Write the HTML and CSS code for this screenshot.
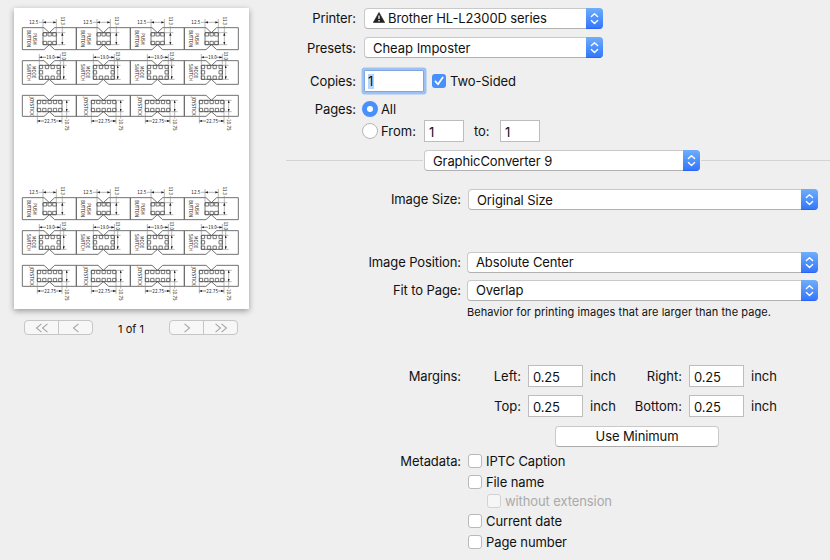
FILE: index.html
```
<!DOCTYPE html>
<html lang="en">
<head>
<meta charset="utf-8">
<title>Print</title>
<link rel="stylesheet" href="styles.css">
</head>
<body>
<svg width="0" height="0" class="defs">
  <defs>
    <marker id="arrow" viewBox="0 0 8 6" refX="8" refY="3" markerWidth="9" markerHeight="7" markerUnits="userSpaceOnUse" orient="auto-start-reverse"><path d="M0 0L8 3L0 6z" fill="#222"/></marker>
    <g id="strip">
      <g class="frame">
        <path d="M67 83H132L148 98L164 83H229M67 149H132L148 134L164 149H229M67 83V149M229 83V149"/>
        <path d="M67 182H132L148 197L164 182H229M67 253H132L148 238L164 253H229M67 182V253M229 182V253"/>
        <path d="M67 286H132L148 301L164 286H229M67 349H132L148 335L164 349H229M67 286V349M229 286V349"/>
      </g>
      <g class="parts">
        <path d="M129 98H169V134H129zM118 196H181V238H118zM112 301H186V335H112z"/>
        <path d="M129 98h11v10h-11zM144 98h10v10h-10zM158 98h11v10h-11zM129 124h11v10h-11zM144 124h10v10h-10zM158 124h11v10h-11z"/>
        <path d="M118 196h10v10h-10zM136 196h10v10h-10zM153 196h10v10h-10zM171 196h10v10h-10zM118 212h10v10h-10zM171 212h10v10h-10zM118 228h10v10h-10zM136 228h10v10h-10zM153 228h10v10h-10zM171 228h10v10h-10z"/>
        <path d="M112 301h10v10h-10zM128 301h10v10h-10zM144 301h10v10h-10zM160 301h10v10h-10zM176 301h10v10h-10zM112 325h10v10h-10zM128 325h10v10h-10zM144 325h10v10h-10zM160 325h10v10h-10zM176 325h10v10h-10z"/>
      </g>
      <g class="dims">
        <path d="M129 96V57M169 96V57M118 194V162M181 194V162M112 337V371M186 337V371M171 98H196M171 134H196M183 196H200M183 238H200M188 301H209M188 335H209M117 67H129M138 172H118M162 172H181M132 363H112M169 363H186"/>
        <path marker-start="url(#arrow)" marker-end="url(#arrow)" d="M129 67H169"/>
        <path marker-end="url(#arrow)" d="M138 172H118"/><path marker-end="url(#arrow)" d="M164 172H181"/>
        <path marker-end="url(#arrow)" d="M132 363H112"/><path marker-end="url(#arrow)" d="M169 363H186"/>
        <path marker-start="url(#arrow)" marker-end="url(#arrow)" d="M187 98V134"/>
        <path marker-start="url(#arrow)" marker-end="url(#arrow)" d="M191 196V238"/>
        <path marker-start="url(#arrow)" marker-end="url(#arrow)" d="M200 301V335"/>
        <path d="M187 98V78M191 196V182M200 335V356"/>
      </g>
      <g class="marks">
        <text x="88" y="73" textLength="27" lengthAdjust="spacingAndGlyphs">12.5</text>
        <text x="139" y="178" textLength="25" lengthAdjust="spacingAndGlyphs">19.0</text>
        <text x="133" y="369" textLength="35" lengthAdjust="spacingAndGlyphs">22.75</text>
        <text transform="translate(182 50) rotate(90)" textLength="25" lengthAdjust="spacingAndGlyphs">11.3</text>
        <text transform="translate(186 155) rotate(90)" textLength="25" lengthAdjust="spacingAndGlyphs">13.0</text>
        <text transform="translate(195 357) rotate(90)" textLength="35" lengthAdjust="spacingAndGlyphs">10.75</text>
        <text transform="translate(98 100) rotate(90)" textLength="34" lengthAdjust="spacingAndGlyphs">PUSH</text>
        <text transform="translate(81 90) rotate(90)" textLength="51" lengthAdjust="spacingAndGlyphs">BUTTON</text>
        <text transform="translate(97 198) rotate(90)" textLength="37" lengthAdjust="spacingAndGlyphs">MODE</text>
        <text transform="translate(80 192) rotate(90)" textLength="51" lengthAdjust="spacingAndGlyphs">SWITCH</text>
        <text transform="translate(91 290) rotate(90)" textLength="57" lengthAdjust="spacingAndGlyphs">JOYSTICK</text>
      </g>
    </g>
    <g id="sheet"><use href="#strip"/><use href="#strip" x="162"/><use href="#strip" x="324"/><use href="#strip" x="486"/></g>
    <g id="chevrons"><rect width="17" height="21" fill="url(#blue)"/><path d="M5.4 8.6L8.5 5.8L11.6 8.6M5.4 12.6L8.5 15.4L11.6 12.6" fill="none" stroke="#fff" stroke-width="1.4" stroke-linecap="round" stroke-linejoin="round"/></g>
    <linearGradient id="blue" x2="0" y2="1"><stop stop-color="#6eaefa"/><stop offset=".95" stop-color="#3478fb"/><stop offset="1" stop-color="#2350f5"/></linearGradient>
  </defs>
</svg>

<aside class="preview">
  <svg class="paper" width="235" height="301" viewBox="42 24 705 903"><use href="#sheet"/><use href="#sheet" y="510"/></svg>
  <div class="pager">
    <div class="seg">
      <button><svg width="14" height="10"><path d="M6.5 .8L1.5 5L6.5 9.2M12.5 .8L7.5 5L12.5 9.2"/></svg></button>
      <button><svg width="8" height="10"><path d="M6.5 .8L1.5 5L6.5 9.2"/></svg></button>
    </div>
    <span class="count">1 of 1</span>
    <div class="seg">
      <button><svg width="8" height="10"><path d="M1.5 .8L6.5 5L1.5 9.2"/></svg></button>
      <button><svg width="14" height="10"><path d="M1.5 .8L6.5 5L1.5 9.2M7.5 .8L12.5 5L7.5 9.2"/></svg></button>
    </div>
  </div>
</aside>

<main class="options">
  <div class="row top printer"><label>Printer:</label><div class="select"><svg class="warn" width="12" height="11"><path d="M6 .4L11.7 10.5H.3z" fill="#222" stroke="#222" stroke-width=".6" stroke-linejoin="round"/><path d="M6 3.4V7M6 8.1V9.4" stroke="#fff" stroke-width="1.3"/></svg><span>Brother HL-L2300D series</span><svg class="arrows" width="17" height="21"><use href="#chevrons"/></svg></div></div>
  <div class="row top presets"><label>Presets:</label><div class="select"><span>Cheap Imposter</span><svg class="arrows" width="17" height="21"><use href="#chevrons"/></svg></div></div>
  <div class="row top copies"><label>Copies:</label><div class="field focus"><mark>1</mark></div><span class="check on"><svg width="14" height="14"><path d="M3.4 7.4L6 10.3L10.7 3.4" fill="none" stroke="#fff" stroke-width="1.7" stroke-linecap="round" stroke-linejoin="round"/></svg></span><span>Two-Sided</span></div>
  <div class="row top all"><label>Pages:</label><span class="radio on"></span><span>All</span></div>
  <div class="row top from"><label></label><span class="radio"></span><span class="from-text">From:</span><div class="field">1</div><span class="to-text">to:</span><div class="field">1</div></div>
  <div class="row divider"><hr class="before"><div class="select"><span>GraphicConverter 9</span><svg class="arrows" width="17" height="21"><use href="#chevrons"/></svg></div><hr class="after"></div>
  <div class="row wide size"><label>Image Size:</label><div class="select"><span>Original Size</span><svg class="arrows" width="17" height="21"><use href="#chevrons"/></svg></div></div>
  <div class="row wide position"><label>Image Position:</label><div class="select"><span>Absolute Center</span><svg class="arrows" width="17" height="21"><use href="#chevrons"/></svg></div></div>
  <div class="row wide fit"><label>Fit to Page:</label><div class="select"><span>Overlap</span><svg class="arrows" width="17" height="21"><use href="#chevrons"/></svg></div></div>
  <div class="row note"><span>Behavior for printing images that are larger than the page.</span></div>
  <div class="row margins first"><label>Margins:</label><span class="side">Left:</span><div class="field">0.25</div><span class="unit">inch</span><span class="side far">Right:</span><div class="field">0.25</div><span class="unit">inch</span></div>
  <div class="row margins"><label></label><span class="side">Top:</span><div class="field">0.25</div><span class="unit">inch</span><span class="side far">Bottom:</span><div class="field">0.25</div><span class="unit">inch</span></div>
  <div class="row action"><button class="push">Use Minimum</button></div>
  <div class="row meta caption"><label>Metadata:</label><span class="check"></span><span>IPTC Caption</span></div>
  <div class="row meta filename"><label></label><span class="check"></span><span>File name</span></div>
  <div class="row meta extension"><label></label><span class="check"></span><span>without extension</span></div>
  <div class="row meta date"><label></label><span class="check"></span><span>Current date</span></div>
  <div class="row meta number"><label></label><span class="check"></span><span>Page number</span></div>
</main>
</body>
</html>
```
FILE: styles.css
```
* { box-sizing: border-box; }
body {
  margin: 0;
  width: 830px;
  height: 560px;
  overflow: hidden;
  display: flex;
  background: #efefef;
  color: #111;
  font: 13px/16px Inter, "Liberation Sans", sans-serif;
  letter-spacing: -.1px;
  white-space: nowrap;
}
.defs { position: absolute; }

.preview { flex: none; width: 286px; padding: 8px 0 0 14px; }
.paper { display: block; background: #fff; box-shadow: 0 2px 6px rgba(0,0,0,.36); }
.frame { fill: none; stroke: #666; stroke-width: 2.8; }
.parts { fill: none; stroke: #555; stroke-width: 2.4; }
.dims { fill: none; stroke: #888; stroke-width: 1.8; }
.marks { font: 16px "DejaVu Sans", sans-serif; fill: #222; letter-spacing: 0; text-rendering: geometricPrecision; }

.pager { display: flex; align-items: center; margin: 11px 0 0 10px; height: 15px; }
.seg { display: flex; width: 69px; height: 15px; border: 1px solid #c6c6c6; border-radius: 4px; background: #f7f7f7; }
.seg button { flex: 1; display: flex; align-items: center; justify-content: center; padding: 0; border: 0; background: none; }
.seg button + button { border-left: 1px solid #c6c6c6; }
.seg path { fill: none; stroke: #a5a5a5; stroke-width: 1.1; }
.count { width: 76px; text-align: center; font-size: 11px; letter-spacing: 0; position: relative; top: 1px; }

.options { flex: 1; padding-top: 4px; }
.row { display: flex; align-items: center; }
.row label { flex: none; width: 175px; text-align: right; margin-right: 7px; }
.top label { width: 70px; margin-right: 8px; }

.select {
  flex: none;
  display: flex;
  align-items: center;
  width: 351px;
  height: 21px;
  padding-left: 9px;
  background: linear-gradient(#c9c9c9, #c9c9c9 90%, #a9a9a9);
  border-radius: 4px;
  overflow: hidden;
  position: relative;
}
.select::before { content: ""; position: absolute; inset: 1px; background: #fff; border-radius: 3px; }
.select > * { position: relative; }
.arrows { margin-left: auto; }
.warn { margin-right: 3px; }
.printer .select, .presets .select { width: 239px; }
.presets span { letter-spacing: -.03px; }
.printer label, .printer span, .printer .warn, .wide label, .wide span { position: relative; top: -1px; }

.field {
  flex: none;
  width: 55px;
  height: 22px;
  padding: 3px 0 0 4px;
  border: 1px solid #bdbdbd;
  background: #fff;
}
.focus { width: 60px; margin: 0 8px 0 0; border-color: #7fa6dd; box-shadow: 0 0 0 2.5px #9dc1f5; border-radius: 1px; padding-top: 3px; line-height: 15px; }
.focus mark { display: inline-block; background: #b4d5fe; color: inherit; width: 6px; margin-left: -1px; }

.check { flex: none; width: 14px; height: 14px; margin-right: 4px; background: #fff; border: 1px solid #b9b9b9; border-radius: 3px; }
.check.on { border: 0; background: #4a90fb; }
.check svg { display: block; }
.radio { flex: none; width: 16px; height: 16px; margin: 0 3px 0 -2px; border: 1px solid #b5b5b5; border-radius: 50%; background: #fff; }
.radio.on { border: 5px solid #4a90fb; }

.printer, .presets { height: 29px; }
.copies { height: 38px; }
.all { height: 18px; }
.from { height: 26px; }
.from .field { width: 40px; }
.from-text { width: 43px; letter-spacing: 0; }
.to-text { width: 36px; padding-left: 10px; }

.divider { height: 33px; }
.divider .select { width: 276px; }
.divider hr { margin: 0; border: 0; border-top: 1px solid #d4d4d4; }
.before { width: 137px; }
.after { flex: 1; }
.divider .before { margin-right: 1px; }
.divider .after { margin-left: 1px; }

.size { height: 45px; }
.size .select { width: 350px; }
.size .select span { top: 0; }
.position { height: 29px; margin-top: 26px; }
.position .select, .fit .select { margin-left: -1px; }
.fit { height: 27px; }
.note { height: 15px; padding-left: 181px; font-size: 11px; letter-spacing: .06px; }

.margins { height: 30px; }
.margins.first { margin-top: 42px; }
.side { width: 53px; text-align: right; margin-right: 7px; letter-spacing: 0; }
.unit { width: 26px; margin-left: 7px; letter-spacing: 0; }
.side.far { width: 66px; }
.field { letter-spacing: -.2px; }
.action { height: 31px; padding-left: 269px; }
.push { width: 164px; height: 21px; padding: 0; border: 1px solid #cacaca; border-bottom-color: #ababab; border-radius: 4px; background: #fff; color: #111; font: inherit; line-height: 19px; letter-spacing: -.1px; }

.caption { height: 18px; }
.filename { height: 24px; }
.extension { height: 14px; color: #aaa; }
.extension .check { margin-left: 19px; background: #f6f6f6; border-color: #d2d2d2; }
.date { height: 26px; }
.number { height: 16px; }
```
